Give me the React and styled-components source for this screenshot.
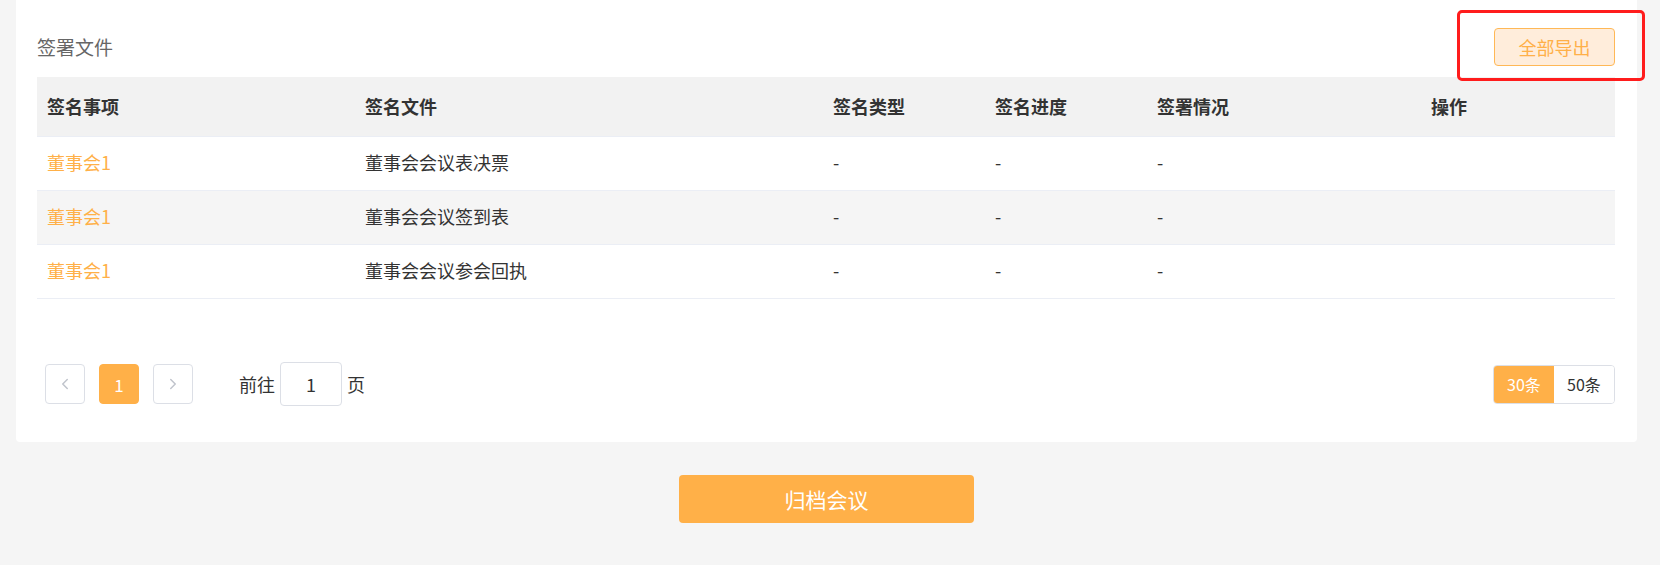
import React from "react";
import styled, { createGlobalStyle } from "styled-components";
import { ChevronLeft, ChevronRight } from "lucide-react";

const orange = "#ffb048";

const GlobalStyle = createGlobalStyle`
    body {
        margin: 0;
        background: #f5f5f5;
        font-family: "Microsoft YaHei", "Noto Sans CJK SC", "Noto Sans", sans-serif;
        color: #333;
    }
`

const Page = styled.div`
    padding: 0 23px 40px 16px;
`

const Card = styled.div`
    position: relative;
    background: #fff;
    border-radius: 0 0 4px 4px;
    padding: 28px 22px 36px 21px;
`

const CardHeader = styled.div`
    display: flex;
    justify-content: space-between;
    align-items: center;
    height: 38px;
    margin-bottom: 11px;
`

const Title = styled.div`
    font-size: 19px;
    color: #666;
    padding-bottom: 2px;
`

const ExportButton = styled.button`
    width: 121px;
    height: 38px;
    border: 1px solid #ffb856;
    border-radius: 4px;
    background: #ffeddb;
    color: ${orange};
    font-family: inherit;
    font-size: 18px;
    cursor: pointer;
`

const Highlight = styled.div`
    position: absolute;
    left: 1441px;
    top: 10px;
    width: 182px;
    height: 65px;
    border: 3px solid #ff1c1c;
    border-radius: 5px;
    pointer-events: none;
`

const Table = styled.table`
    width: 100%;
    border-collapse: collapse;
    table-layout: fixed;
`

const Th = styled.th`
    height: 57px;
    padding: 0 10px 2px;
    background: #f2f2f2;
    text-align: left;
    font-size: 18px;
    font-weight: bold;
    color: #333;
    border-bottom: 1px solid #ebeef5;
`

const Tr = styled.tr`
    background: ${({ striped }) => (striped ? "#f5f5f5" : "#fff")};
`

const Td = styled.td`
    height: 50px;
    padding: 0 10px 3px;
    font-size: 18px;
    color: ${({ link }) => (link ? orange : "#333")};
    border-bottom: 1px solid #ebeef5;
`

const PagerBar = styled.div`
    display: flex;
    justify-content: space-between;
    align-items: center;
    margin-top: 63px;
    padding-left: 8px;
`

const Pager = styled.div`
    display: flex;
    align-items: center;
    gap: 14px;
`

const PageButton = styled.button`
    width: 40px;
    height: 40px;
    display: flex;
    align-items: center;
    justify-content: center;
    padding: 0;
    border-radius: 4px;
    border: 1px solid ${({ active }) => (active ? orange : "#dcdfe6")};
    background: ${({ active }) => (active ? orange : "#fff")};
    color: ${({ active }) => (active ? "#fff" : "#c0c4cc")};
    font-family: inherit;
    font-size: 17px;
`

const Jump = styled.div`
    display: flex;
    align-items: center;
    gap: 5px;
    margin-left: 32px;
    font-size: 18px;
    color: #333;
`

const JumpInput = styled.div`
    width: 60px;
    height: 42px;
    display: flex;
    align-items: center;
    justify-content: center;
    border: 1px solid #dcdfe6;
    border-radius: 4px;
    font-size: 18px;
`

const Sizes = styled.div`
    display: flex;
    height: 37px;
    border: 1px solid #dcdfe6;
    border-radius: 4px;
    overflow: hidden;
`

const SizeOption = styled.div`
    width: 60px;
    display: flex;
    align-items: center;
    justify-content: center;
    font-size: 16px;
    background: ${({ active }) => (active ? orange : "#fff")};
    color: ${({ active }) => (active ? "#fff" : "#333")};
`

const Footer = styled.div`
    display: flex;
    justify-content: center;
    padding-top: 33px;
`

const ArchiveButton = styled.button`
    width: 295px;
    height: 48px;
    border: none;
    border-radius: 4px;
    background: ${orange};
    color: #fff;
    font-family: inherit;
    font-size: 21px;
    cursor: pointer;
`

const columns = [
    { title: "签名事项", width: 318 },
    { title: "签名文件", width: 468 },
    { title: "签名类型", width: 162 },
    { title: "签名进度", width: 162 },
    { title: "签署情况", width: 274 },
    { title: "操作", width: 194 },
]

const rows = [
    { item: "董事会1", file: "董事会会议表决票" },
    { item: "董事会1", file: "董事会会议签到表" },
    { item: "董事会1", file: "董事会会议参会回执" },
]

const App = () => {
    return (
        <Page>
            <GlobalStyle />
            <Card>
                <CardHeader>
                    <Title>签署文件</Title>
                    <ExportButton>全部导出</ExportButton>
                </CardHeader>
                <Highlight />
                <Table>
                    <colgroup>
                        {columns.map((c) => (
                            <col key={c.title} style={{ width: c.width }} />
                        ))}
                    </colgroup>
                    <thead>
                        <tr>
                            {columns.map((c) => (
                                <Th key={c.title}>{c.title}</Th>
                            ))}
                        </tr>
                    </thead>
                    <tbody>
                        {rows.map((r, i) => (
                            <Tr key={r.file} striped={i % 2 === 1}>
                                <Td link>{r.item}</Td>
                                <Td>{r.file}</Td>
                                <Td>-</Td>
                                <Td>-</Td>
                                <Td>-</Td>
                                <Td></Td>
                            </Tr>
                        ))}
                    </tbody>
                </Table>
                <PagerBar>
                    <Pager>
                        <PageButton><ChevronLeft size={18} strokeWidth={2} /></PageButton>
                        <PageButton active>1</PageButton>
                        <PageButton><ChevronRight size={18} strokeWidth={2} /></PageButton>
                        <Jump>
                            前往
                            <JumpInput>1</JumpInput>
                            页
                        </Jump>
                    </Pager>
                    <Sizes>
                        <SizeOption active>30条</SizeOption>
                        <SizeOption>50条</SizeOption>
                    </Sizes>
                </PagerBar>
            </Card>
            <Footer>
                <ArchiveButton>归档会议</ArchiveButton>
            </Footer>
        </Page>
    )
}

export default App
